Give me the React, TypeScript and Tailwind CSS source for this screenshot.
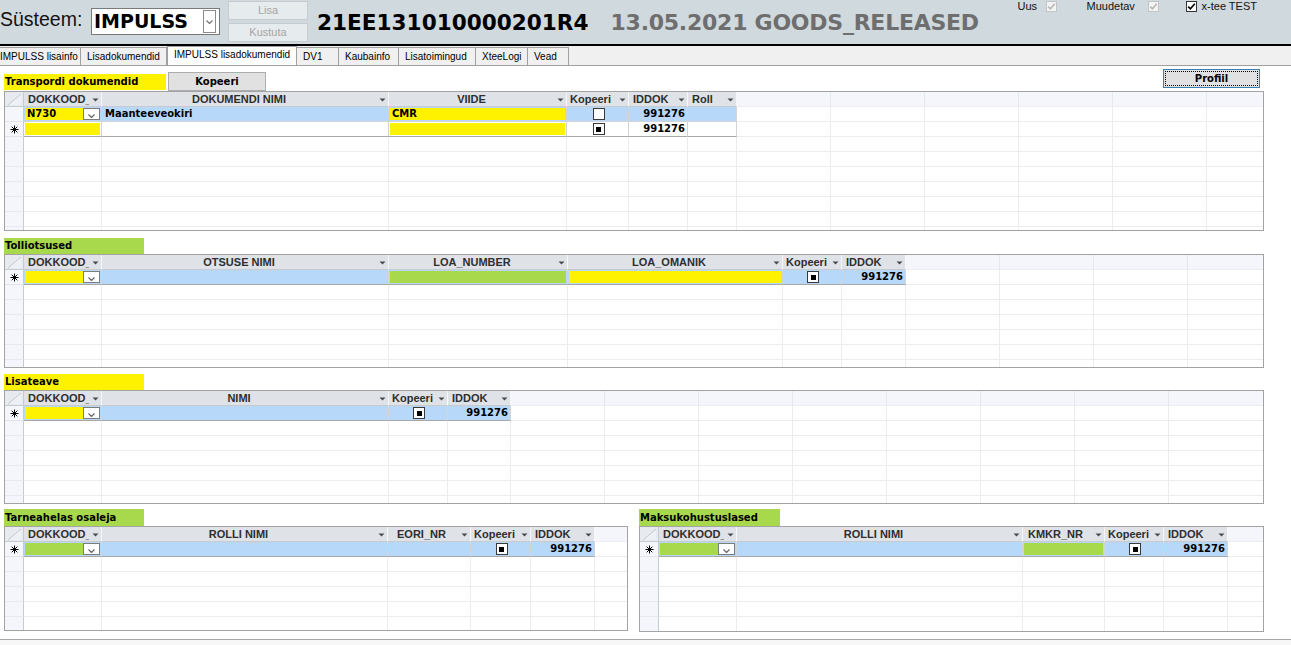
const cx = (...c: (string | false | null | undefined)[]) => c.filter(Boolean).join(" ");

type Col = { title: string; w: string; pad: string };
type Cell = {
  fill?: string;
  text?: string;
  num?: boolean;
  combo?: boolean;
  box?: "empty" | "mixed";
};
type Row = { current?: boolean; fresh?: boolean; cells: Cell[] };

const YEL = "bg-[#fff200]";
const GRN = "bg-[#a8d84c]";
const DATA_FONT = "font-['DejaVu_Sans',Verdana,sans-serif]";

// ── Datasheet definitions ──

const transportCols: Col[] = [
  { title: "DOKKOOD_", w: "w-[78px]", pad: "pl-[4px]" },
  { title: "DOKUMENDI NIMI", w: "w-[287px]", pad: "justify-center" },
  { title: "VIIDE", w: "w-[178px]", pad: "justify-center" },
  { title: "Kopeeri", w: "w-[62px]", pad: "pl-[3px]" },
  { title: "IDDOK", w: "w-[59px]", pad: "pl-[4px]" },
  { title: "Roll", w: "w-[49px]", pad: "pl-[4px]" },
];
const transportRows: Row[] = [
  {
    current: true,
    cells: [
      { fill: YEL, text: "N730", combo: true },
      { text: "Maanteeveokiri" },
      { fill: YEL, text: "CMR" },
      { box: "empty" },
      { text: "991276", num: true },
      {},
    ],
  },
  {
    fresh: true,
    cells: [{ fill: YEL }, {}, { fill: YEL }, { box: "mixed" }, { text: "991276", num: true }, {}],
  },
];

const decisionCols: Col[] = [
  { title: "DOKKOOD_", w: "w-[78px]", pad: "pl-[4px]" },
  { title: "OTSUSE NIMI", w: "w-[287px]", pad: "justify-center" },
  { title: "LOA_NUMBER", w: "w-[179px]", pad: "justify-center" },
  { title: "LOA_OMANIK", w: "w-[215px]", pad: "justify-center" },
  { title: "Kopeeri", w: "w-[59px]", pad: "pl-[3px]" },
  { title: "IDDOK", w: "w-[64px]", pad: "pl-[4px]" },
];
const decisionRows: Row[] = [
  {
    current: true,
    fresh: true,
    cells: [
      { fill: YEL, combo: true },
      {},
      { fill: GRN },
      { fill: YEL },
      { box: "mixed" },
      { text: "991276", num: true },
    ],
  },
];

const infoCols: Col[] = [
  { title: "DOKKOOD_", w: "w-[78px]", pad: "pl-[4px]" },
  { title: "NIMI", w: "w-[287px]", pad: "justify-center" },
  { title: "Kopeeri", w: "w-[59px]", pad: "pl-[3px]" },
  { title: "IDDOK", w: "w-[63px]", pad: "pl-[4px]" },
];
const infoRows: Row[] = [
  {
    current: true,
    fresh: true,
    cells: [{ fill: YEL, combo: true }, {}, { box: "mixed" }, { text: "991276", num: true }],
  },
];

const chainCols: Col[] = [
  { title: "DOKKOOD_", w: "w-[78px]", pad: "pl-[4px]" },
  { title: "ROLLI NIMI", w: "w-[286px]", pad: "justify-center" },
  { title: "EORI_NR", w: "w-[83px]", pad: "pl-[9px]" },
  { title: "Kopeeri", w: "w-[60px]", pad: "pl-[3px]" },
  { title: "IDDOK", w: "w-[64px]", pad: "pl-[4px]" },
];
const chainRows: Row[] = [
  {
    current: true,
    fresh: true,
    cells: [{ fill: GRN, combo: true }, {}, {}, { box: "mixed" }, { text: "991276", num: true }],
  },
];

const taxCols: Col[] = [
  { title: "DOKKOOD_", w: "w-[78px]", pad: "pl-[4px]" },
  { title: "ROLLI NIMI", w: "w-[286px]", pad: "justify-center" },
  { title: "KMKR_NR", w: "w-[82px]", pad: "pl-[5px]" },
  { title: "Kopeeri", w: "w-[59px]", pad: "pl-[3px]" },
  { title: "IDDOK", w: "w-[64px]", pad: "pl-[4px]" },
];
const taxRows: Row[] = [
  {
    current: true,
    fresh: true,
    cells: [
      { fill: GRN, combo: true },
      {},
      { fill: GRN },
      { box: "mixed" },
      { text: "991276", num: true },
    ],
  },
];

const tabs = [
  { label: "IMPULSS lisainfo", w: "w-[82px]" },
  { label: "Lisadokumendid", w: "w-[86px]" },
  { label: "IMPULSS lisadokumendid", w: "w-[130px]", active: true },
  { label: "DV1", w: "w-[42px]" },
  { label: "Kaubainfo", w: "w-[60px]" },
  { label: "Lisatoimingud", w: "w-[77px]" },
  { label: "XteeLogi", w: "w-[52px]" },
  { label: "Vead", w: "w-[41px]" },
];

// ── Small drawings ──

function SortArrow() {
  return (
    <svg width="7" height="4" viewBox="0 0 7 4">
      <path d="M0.5 0.5h6L3.5 3.5z" fill="#4a4a4a" />
    </svg>
  );
}

function Chevron({ color = "#555" }: { color?: string }) {
  return (
    <svg width="7" height="4" viewBox="0 0 7 4">
      <path d="M0.5 0.5L3.5 3.5L6.5 0.5" fill="none" stroke={color} strokeWidth="1.2" />
    </svg>
  );
}

function NewRowStar() {
  return (
    <svg width="9" height="9" viewBox="0 0 9 9">
      <path
        d="M4.5 0.5V8.5M0.5 4.5H8.5M1.7 1.7L7.3 7.3M7.3 1.7L1.7 7.3"
        stroke="#000"
        strokeWidth="1"
      />
    </svg>
  );
}

function Corner() {
  return (
    <svg width="18" height="14" viewBox="0 0 18 14">
      <path d="M3 13L16 2V13z" fill="#edf0f4" />
      <path d="M3 13L16 2" stroke="#c4c8d0" strokeWidth="1" />
    </svg>
  );
}

function TickBox({ on, disabled }: { on: boolean; disabled?: boolean }) {
  return (
    <div
      className={cx(
        "flex h-[11px] w-[11px] shrink-0 items-center justify-center border",
        disabled ? "border-[#c4c4c4] bg-[#f3f3f3]" : "border-[#333] bg-white"
      )}
    >
      {on && (
        <svg width="9" height="9" viewBox="0 0 9 9">
          <path
            d="M1.2 4.6L3.4 6.8L7.8 1.8"
            fill="none"
            stroke={disabled ? "#b8b8b8" : "#000"}
            strokeWidth="1.6"
          />
        </svg>
      )}
    </div>
  );
}

function CellCheck({ mixed }: { mixed: boolean }) {
  return (
    <div className="flex h-[12px] w-[12px] items-center justify-center border border-[#3a3a3a] bg-white">
      {mixed && <div className="h-[5px] w-[5px] bg-black" />}
    </div>
  );
}

// ── Datasheet ──

function HeadCell({ col }: { col: Col }) {
  return (
    <div
      className={cx(
        "relative flex h-full shrink-0 items-center overflow-hidden whitespace-nowrap border-r border-b border-r-[#f6f7f9] border-b-[#c6cad1] bg-[#dfe3e8] pr-[12px] font-['Liberation_Sans',Arial,sans-serif] text-[11px] leading-none font-bold text-[#2e2e2e]",
        col.w,
        col.pad
      )}
    >
      {col.title}
      <span className="absolute top-0 right-0 flex h-full w-[12px] items-center justify-center bg-[#dfe3e8] pt-[2px]">
        <SortArrow />
      </span>
    </div>
  );
}

function DataCell({ col, cell, row }: { col: Col; cell: Cell; row: Row }) {
  return (
    <div
      className={cx(
        "h-full shrink-0 border-r border-b border-r-[#d4d4d4] p-px",
        col.w,
        row.current ? "bg-[#b8d8fa]" : "bg-white",
        row.fresh ? "border-b-[#a8a8a8]" : "border-b-[#d4d4d4]"
      )}
    >
      <div className="flex h-full">
        <div
          className={cx(
            "flex h-full flex-1 items-center overflow-hidden whitespace-nowrap",
            cell.fill,
            cell.num ? "justify-end pr-[1px]" : "pl-[2px]",
            cell.box && "justify-center pl-0"
          )}
        >
          {cell.text && (
            <span className={cx(DATA_FONT, "text-[10px] leading-none font-bold text-black")}>
              {cell.text}
            </span>
          )}
          {cell.box && <CellCheck mixed={cell.box === "mixed"} />}
        </div>
        {cell.combo && (
          <div className="flex h-full w-[17px] shrink-0 items-end justify-center border border-[#7c7c7c] bg-white pb-[1px]">
            <Chevron color="#666" />
          </div>
        )}
      </div>
    </div>
  );
}

function Datasheet({
  cols,
  rows,
  fillers,
  className,
}: {
  cols: Col[];
  rows: Row[];
  fillers: number;
  className: string;
}) {
  const spare = Array.from({ length: fillers });
  const blank = Array.from({ length: 10 });

  return (
    <div className={cx("flex flex-col overflow-hidden border border-[#a3a3a3] bg-white", className)}>
      {/* header */}
      <div className="flex h-[15px] shrink-0">
        <div className="flex h-full w-[19px] shrink-0 items-end border-r border-b border-r-[#c6cad1] border-b-[#c6cad1] bg-[#e7eaee]">
          <Corner />
        </div>
        {cols.map((c) => (
          <HeadCell key={c.title} col={c} />
        ))}
        {spare.map((_, i) => (
          <div
            key={i}
            className="h-full w-[94px] shrink-0 border-r border-b border-r-[#e6e8ef] border-b-[#eceef3] bg-[#f4f6fc]"
          />
        ))}
        <div className="h-full flex-1 border-b border-b-[#eceef3] bg-[#f4f6fc]" />
      </div>

      {/* records */}
      {rows.map((row, r) => (
        <div key={r} className="flex h-[15px] shrink-0">
          <div className="flex h-full w-[19px] shrink-0 items-center justify-center border-r border-b border-r-[#c6cad1] border-b-[#e1e4ea] bg-[#f4f6fc]">
            {row.fresh && <NewRowStar />}
          </div>
          {cols.map((c, i) => (
            <DataCell key={c.title} col={c} cell={row.cells[i]} row={row} />
          ))}
          {spare.map((_, i) => (
            <div
              key={i}
              className="h-full w-[94px] shrink-0 border-r border-b border-r-[#ececec] border-b-[#ececec]"
            />
          ))}
          <div className="h-full flex-1 border-b border-b-[#ececec]" />
        </div>
      ))}

      {/* empty area */}
      {blank.map((_, r) => (
        <div key={r} className="flex h-[15px] shrink-0">
          <div className="h-full w-[19px] shrink-0 border-r border-b border-r-[#c6cad1] border-b-[#e8eaf0] bg-[#f4f6fc]" />
          {cols.map((c) => (
            <div
              key={c.title}
              className={cx("h-full shrink-0 border-r border-b border-r-[#ececec] border-b-[#ececec]", c.w)}
            />
          ))}
          {spare.map((_, i) => (
            <div
              key={i}
              className="h-full w-[94px] shrink-0 border-r border-b border-r-[#ececec] border-b-[#ececec]"
            />
          ))}
          <div className="h-full flex-1 border-b border-b-[#ececec]" />
        </div>
      ))}
    </div>
  );
}

function SectionLabel({ text, className }: { text: string; className: string }) {
  return (
    <div
      className={cx(
        "flex shrink-0 items-center pl-[1px] text-[10px] leading-none font-bold whitespace-nowrap text-black",
        DATA_FONT,
        className
      )}
    >
      {text}
    </div>
  );
}

export default function App() {
  return (
    <div className="h-[645px] w-[1291px] overflow-hidden bg-white font-['Liberation_Sans',Arial,sans-serif] text-black">
      {/* form header */}
      <div className="flex h-[46px] items-start border-b-2 border-b-black bg-[#cfd9de]">
        <div className="w-[91px] shrink-0 pt-[7px]">
          <div className="text-[19.5px] leading-[24px] whitespace-nowrap text-[#111]">Süsteem:</div>
        </div>

        <div className="mt-[8px] flex h-[27px] w-[129px] shrink-0 border border-[#7a7a7a] bg-white">
          <div className={cx(DATA_FONT, "flex flex-1 items-center pl-[2px] text-[19px] leading-none font-bold")}>
            IMPULSS
          </div>
          <div className="my-px mr-[3px] flex w-[13px] items-center justify-center border border-[#8c8c8c] bg-white">
            <Chevron color="#777" />
          </div>
        </div>

        <div className="ml-[8px] flex w-[80px] shrink-0 flex-col">
          <div className="mt-[1px] flex h-[19px] items-center justify-center border border-[#c5cbce] bg-[#e6ebed] text-[11px] text-[#a5a5a5]">
            Lisa
          </div>
          <div className="mt-[3px] flex h-[19px] items-center justify-center border border-[#c5cbce] bg-[#e6ebed] text-[11px] text-[#a5a5a5]">
            Kustuta
          </div>
        </div>

        <div className={cx(DATA_FONT, "mt-[9px] ml-[9px] flex items-baseline font-bold whitespace-nowrap")}>
          <span className="text-[21.6px] leading-[28px] text-black">21EE131010000201R4</span>
          <span className="ml-[22px] text-[22px] leading-[28px] tracking-[-0.25px] text-[#6e6e6e]">
            13.05.2021 GOODS_RELEASED
          </span>
        </div>

        <div className="mr-[34px] ml-auto flex h-[12px] items-center text-[11px] leading-none text-[#111]">
          <span className="w-[28px]">Uus</span>
          <TickBox on disabled />
          <span className="ml-[30px] w-[61px]">Muudetav</span>
          <TickBox on disabled />
          <span className="ml-[27px]" />
          <TickBox on />
          <span className="ml-[5px] whitespace-nowrap">x-tee TEST</span>
        </div>
      </div>

      {/* tab strip */}
      <div className="flex h-[20px] items-end overflow-hidden border-b border-b-[#a0a0a0] bg-[#f0f0f0] text-[10px] leading-none">
        <div className="-ml-px flex items-end">
          {tabs.map((t, i) =>
            t.active ? (
              <div
                key={t.label}
                className={cx(
                  "relative -mb-px flex h-[20px] shrink-0 items-center border-x border-t border-[#a0a0a0] bg-white pb-[3px] pl-[6px] whitespace-nowrap text-black",
                  t.w
                )}
              >
                {t.label}
              </div>
            ) : (
              <div
                key={t.label}
                className={cx(
                  "flex h-[18px] shrink-0 items-center border-t border-r border-[#a0a0a0] bg-[#f0f0f0] whitespace-nowrap text-black",
                  i === 0 ? "pl-[1px]" : "pl-[6px]",
                  t.w
                )}
              >
                {t.label}
              </div>
            )
          )}
        </div>
      </div>

      {/* page body */}
      <div className="flex w-[1264px] flex-col pl-[4px]">
        <div className="flex h-[25px] items-start">
          <SectionLabel text="Transpordi dokumendid" className={cx("mt-[8px] h-[16px] w-[162px]", YEL)} />
          <div
            className={cx(
              DATA_FONT,
              "mt-[6px] ml-[2px] flex h-[19px] w-[98px] items-center justify-center border border-[#adadad] bg-[#e1e1e1] text-[10px] font-bold"
            )}
          >
            Kopeeri
          </div>
          <div className="mt-[3px] mr-[4px] ml-auto h-[19px] w-[97px] border border-[#3c7fb1] bg-[#e1e1e1] p-px">
            <div
              className={cx(
                DATA_FONT,
                "flex h-full items-center justify-center border border-dotted border-black text-[10px] font-bold"
              )}
            >
              Profiil
            </div>
          </div>
        </div>

        <Datasheet cols={transportCols} rows={transportRows} fillers={5} className="h-[140px] w-[1260px]" />

        <SectionLabel text="Tolliotsused" className={cx("mt-[7px] h-[16px] w-[140px]", GRN)} />
        <Datasheet cols={decisionCols} rows={decisionRows} fillers={3} className="h-[114px] w-[1260px]" />

        <SectionLabel text="Lisateave" className={cx("mt-[6px] h-[16px] w-[140px]", YEL)} />
        <Datasheet cols={infoCols} rows={infoRows} fillers={7} className="h-[114px] w-[1260px]" />

        <div className="mt-[5px] flex">
          <div className="flex w-[624px] flex-col">
            <SectionLabel text="Tarneahelas osaleja" className={cx("h-[17px] w-[140px]", GRN)} />
            <Datasheet cols={chainCols} rows={chainRows} fillers={0} className="h-[105px]" />
          </div>
          <div className="ml-[11px] flex w-[625px] flex-col">
            <SectionLabel text="Maksukohustuslased" className={cx("h-[17px] w-[141px]", GRN)} />
            <Datasheet cols={taxCols} rows={taxRows} fillers={0} className="h-[106px]" />
          </div>
        </div>
      </div>

      <div className="mt-[7px] h-[10px] border-t border-t-[#a6a6a6] bg-[#f7f7f7]" />
    </div>
  );
}
